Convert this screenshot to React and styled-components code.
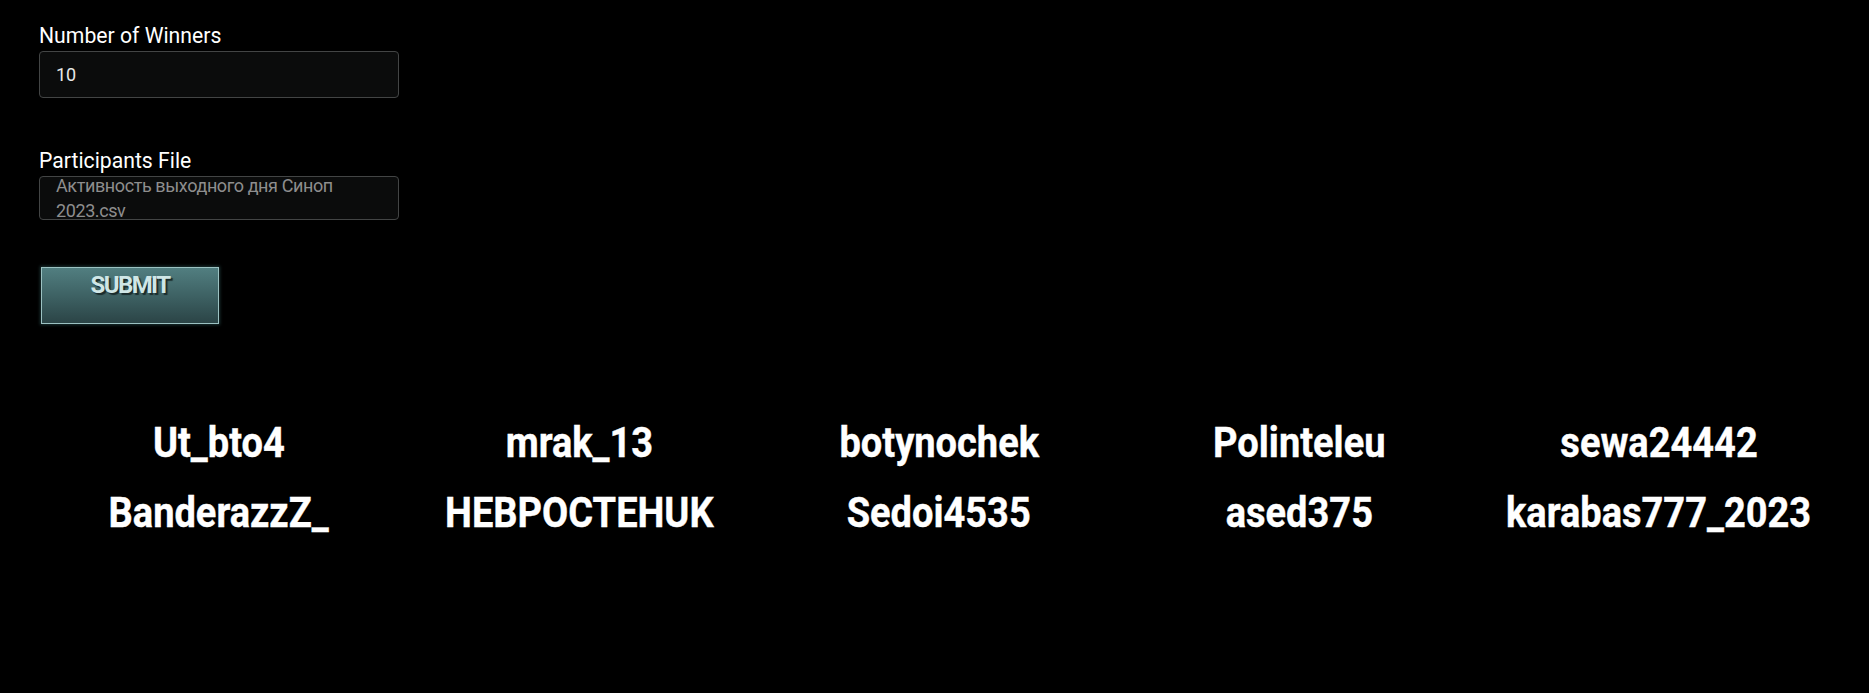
import React from 'react';
import styled, { createGlobalStyle } from 'styled-components';

const GlobalStyle = createGlobalStyle`
  html, body {
    margin: 0;
    padding: 0;
    background: #000;
  }
  body {
    font-family: Roboto, 'Noto Sans', 'Liberation Sans', sans-serif;
    color: #fff;
  }
`;

const Page = styled.div`
  min-height: 693px;
  padding: 23px 30px 0 39px;
  box-sizing: border-box;
`;

const Form = styled.form`
  display: flex;
  flex-direction: column;
  align-items: flex-start;
  width: 360px;
`;

const Field = styled.div`
  display: flex;
  flex-direction: column;
  gap: ${(p) => p.gap || 3}px;
  width: 100%;
  margin-bottom: ${(p) => p.spacing || 0}px;
`;

const Label = styled.label`
  font-size: 21.2px;
  line-height: 25px;
  color: #fff;
`;

const Box = styled.div`
  box-sizing: border-box;
  width: 360px;
  height: ${(p) => p.h}px;
  padding: 0 16px;
  background: #0b0c0c;
  border: 1px solid #434545;
  border-radius: 4px;
  overflow: hidden;
`;

const NumberValue = styled.div`
  font-size: 18px;
  line-height: 45px;
  color: #e8e8e8;
`;

const FileName = styled.div`
  margin-top: -4px;
  font-size: 18px;
  letter-spacing: -0.4px;
  line-height: 25px;
  color: #8e8e8e;
`;

const SubmitButton = styled.button`
  box-sizing: border-box;
  width: 178px;
  height: 57px;
  margin-left: 2px;
  padding: 4px 0 0;
  display: flex;
  justify-content: center;
  align-items: flex-start;
  background: linear-gradient(to bottom, #517e80 0%, #3e6264 50%, #2b4446 100%);
  border: 1px solid #9cc2c2;
  box-shadow: 0 0 3px 1px rgba(60, 110, 110, 0.45);
  font-family: Roboto, 'Liberation Sans', sans-serif;
  font-weight: 700;
  font-size: 24px;
  letter-spacing: -1.6px;
  line-height: 26px;
  color: #cfe6e6;
  text-shadow: 2px 2px 1px #1a2b2c;
  cursor: pointer;
`;

const Winners = styled.div`
  display: grid;
  grid-template-columns: repeat(5, 360px);
  margin-top: 84px;
`;

const Winner = styled.div`
  display: flex;
  justify-content: center;
  font-size: 42px;
  font-weight: 700;
  line-height: 70px;
  color: #fff;
  white-space: nowrap;
`;

const WinnerName = styled.span`
  display: inline-block;
  transform: scaleX(0.905);
  -webkit-text-stroke: 0.4px #fff;
`;

const winners = [
  'Ut_bto4',
  'mrak_13',
  'botynochek',
  'Polinteleu',
  'sewa24442',
  'BanderazzZ_',
  'НЕВРОСТЕНUK',
  'Sedoi4535',
  'ased375',
  'karabas777_2023',
];

const App = () => (
  <Page>
    <GlobalStyle />
    <Form onSubmit={(e) => e.preventDefault()}>
      <Field spacing={50}>
        <Label>Number of Winners</Label>
        <Box h={47}>
          <NumberValue>10</NumberValue>
        </Box>
      </Field>
      <Field spacing={47} gap={3}>
        <Label>Participants File</Label>
        <Box h={44}>
          <FileName>Активность выходного дня Синоп 2023.csv</FileName>
        </Box>
      </Field>
      <SubmitButton type="submit">SUBMIT</SubmitButton>
    </Form>
    <Winners>
      {winners.map((name) => (
        <Winner key={name}>
          <WinnerName>{name}</WinnerName>
        </Winner>
      ))}
    </Winners>
  </Page>
);

export default App;
